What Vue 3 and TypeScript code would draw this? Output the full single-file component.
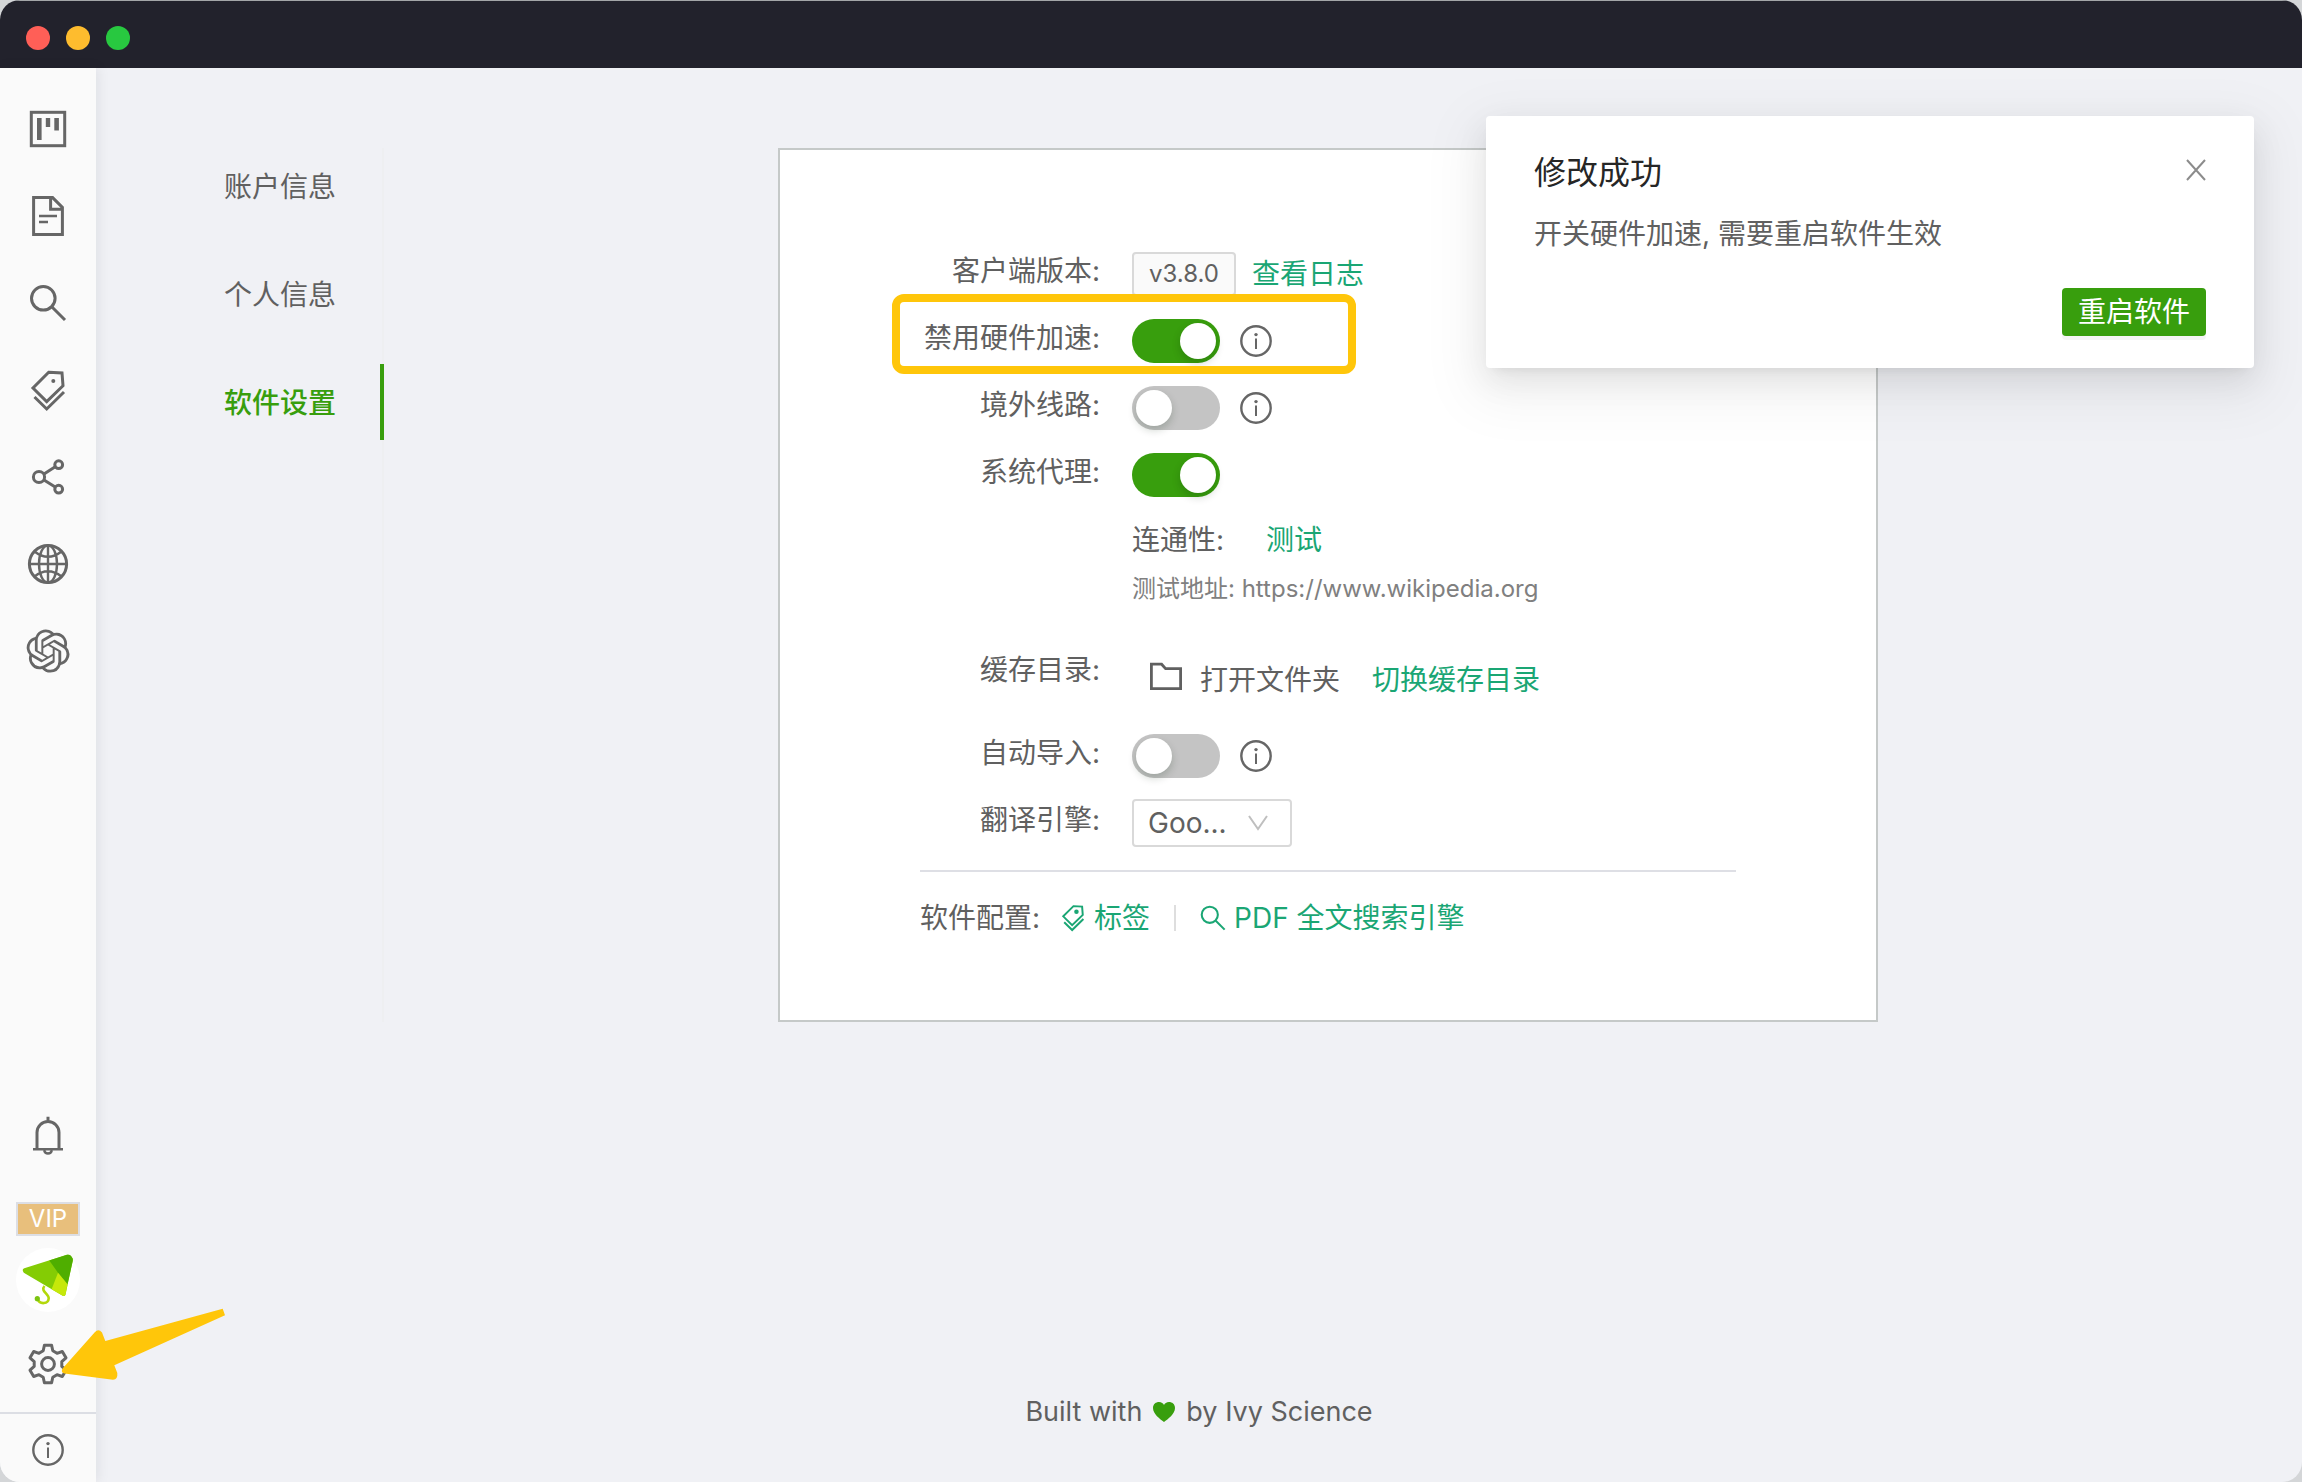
<script setup lang="ts">
import { ref } from 'vue'

type IconName = 'board' | 'file' | 'search' | 'tags' | 'share' | 'globe' | 'ai'

const navIcons: { name: IconName; label: string }[] = [
  { name: 'board', label: '看板' },
  { name: 'file', label: '文献' },
  { name: 'search', label: '搜索' },
  { name: 'tags', label: '标签' },
  { name: 'share', label: '分享' },
  { name: 'globe', label: '网络' },
  { name: 'ai', label: 'AI' },
]

const tabs = ['账户信息', '个人信息', '软件设置']
const activeTab = ref('软件设置')

const disableGpu = ref(true)
const overseas = ref(false)
const proxy = ref(true)
const autoImport = ref(false)
const engine = ref('google')

// Outline of a six-toothed gear centred on (24, 24)
function gearOutline(): string {
  const points: string[] = []
  for (let tooth = 0; tooth < 6; tooth++) {
    const corners: [number, number][] = [[-20, 14], [-11, 19], [11, 19], [20, 14]]
    for (const [offset, radius] of corners) {
      const angle = ((tooth * 60 - 90 + offset) * Math.PI) / 180
      points.push(`${(24 + radius * Math.cos(angle)).toFixed(1)} ${(24 + radius * Math.sin(angle)).toFixed(1)}`)
    }
  }
  return `M${points.join('L')}Z`
}
const gear = gearOutline()
</script>

<template>
  <div class="window">
    <header class="titlebar">
      <button class="light close" aria-label="关闭窗口"></button>
      <button class="light minimise" aria-label="最小化"></button>
      <button class="light zoom" aria-label="缩放"></button>
    </header>

    <div class="body">
      <aside class="sidebar">
        <nav class="side-top">
          <button v-for="item in navIcons" :key="item.name" class="side-btn" :aria-label="item.label">
            <svg class="icon" viewBox="0 0 48 48">
              <template v-if="item.name === 'board'">
                <rect x="7.3" y="7.3" width="33.4" height="33.4" />
                <path class="solid" d="M13 13h4.6v22H13zM21.8 13h4.4v9h-4.4zM30.3 13h4.6v12.5h-4.6z" />
              </template>
              <template v-else-if="item.name === 'file'">
                <path d="M9.6 5.6H28.6L38.4 15.4V42.4H9.6ZM26.6 5.6V17.2H38.4" />
                <path class="thin" d="M15 24H33M15 30H24" />
              </template>
              <template v-else-if="item.name === 'search'">
                <circle cx="19.3" cy="19.3" r="11.8" />
                <path d="M28 28L41 41" />
              </template>
              <template v-else-if="item.name === 'tags'">
                <path d="M24.7 6.3L38 7L39 19.7L22.7 35.6L9 22ZM10.5 31L22.7 43L40 26" />
                <circle class="solid" cx="29.3" cy="15" r="2" />
              </template>
              <template v-else-if="item.name === 'share'">
                <circle cx="15" cy="24" r="5.6" />
                <circle cx="34.7" cy="11.7" r="3.9" />
                <circle cx="34.7" cy="36.2" r="3.9" />
                <path d="M20 21L31.2 13.8M20 27L31.2 34" />
              </template>
              <template v-else-if="item.name === 'globe'">
                <circle cx="24" cy="24" r="18.6" />
                <g class="thin">
                  <path d="M24 5V43M5 24H43M10.5 11.5Q24 22 37.5 11.5M10.5 36.5Q24 26 37.5 36.5" />
                  <ellipse cx="24" cy="24" rx="9" ry="18.6" />
                </g>
              </template>
              <path
                v-else
                class="solid"
                transform="translate(2.4 2.4) scale(1.8)"
                d="M22.2819 9.8211a5.9847 5.9847 0 0 0-.5157-4.9108 6.0462 6.0462 0 0 0-6.5098-2.9A6.0651 6.0651 0 0 0 4.9807 4.1818a5.9847 5.9847 0 0 0-3.9977 2.9 6.0462 6.0462 0 0 0 .7427 7.0966 5.98 5.98 0 0 0 .511 4.9107 6.051 6.051 0 0 0 6.5146 2.9001A5.9847 5.9847 0 0 0 13.2599 24a6.0557 6.0557 0 0 0 5.7718-4.2058 5.9894 5.9894 0 0 0 3.9977-2.9001 6.0557 6.0557 0 0 0-.7475-7.0729zm-9.022 12.6081a4.4755 4.4755 0 0 1-2.8764-1.0408l.1419-.0804 4.7783-2.7582a.7948.7948 0 0 0 .3927-.6813v-6.7369l2.02 1.1686a.071.071 0 0 1 .038.052v5.5826a4.504 4.504 0 0 1-4.4945 4.4944zm-9.6607-4.1254a4.4708 4.4708 0 0 1-.5346-3.0137l.142.0852 4.783 2.7582a.7712.7712 0 0 0 .7806 0l5.8428-3.3685v2.3324a.0804.0804 0 0 1-.0332.0615L9.74 19.9502a4.4992 4.4992 0 0 1-6.1408-1.6464zM2.3408 7.8956a4.485 4.485 0 0 1 2.3655-1.9728V11.6a.7664.7664 0 0 0 .3879.6765l5.8144 3.3543-2.0201 1.1685a.0757.0757 0 0 1-.071 0l-4.8303-2.7865A4.504 4.504 0 0 1 2.3408 7.872zm16.5963 3.8558L13.1038 8.364 15.1192 7.2a.0757.0757 0 0 1 .071 0l4.8303 2.7913a4.4944 4.4944 0 0 1-.6765 8.1042v-5.6772a.79.79 0 0 0-.407-.667zm2.0107-3.0231l-.142-.0852-4.7735-2.7818a.7759.7759 0 0 0-.7854 0L9.409 9.2297V6.8974a.0662.0662 0 0 1 .0284-.0615l4.8303-2.7866a4.4992 4.4992 0 0 1 6.6802 4.66zM8.3065 12.863l-2.02-1.1638a.0804.0804 0 0 1-.038-.0567V6.0742a4.4992 4.4992 0 0 1 7.3757-3.4537l-.142.0805L8.704 5.459a.7948.7948 0 0 0-.3927.6813zm1.0976-2.3654l2.602-1.4998 2.6069 1.4998v2.9994l-2.5974 1.4997-2.6067-1.4997Z"
              />
            </svg>
          </button>
        </nav>

        <div class="side-bottom">
          <button class="side-btn bell" aria-label="通知">
            <svg class="icon" viewBox="0 0 48 48">
              <path d="M13 37V20.5a11 11 0 0 1 22 0V37M24 4.7V9" />
              <path class="thin" d="M9 37.3H39M20.2 38.5a3.9 3.9 0 0 0 7.6 0" />
            </svg>
          </button>
          <span class="vip">VIP</span>
          <button class="avatar" aria-label="账户">
            <svg viewBox="0 0 64 64">
              <path
                fill="#84cc04"
                d="M8.300 20.200L51 6.800Q53.500 6.200 55 8L56 9.500Q57.200 11 56.700 13L49.500 46.500Q48.800 49 46.300 47.600L7.800 24.800Q5.400 21.300 8.300 20.200Z"
              />
              <path fill="#4fae00" d="M33.300 12.400L51 6.800Q53.500 6.200 55 8L56 9.500Q57.200 11 56.700 13L51.500 36.200L42 24.700Z" />
              <path fill="#c6e80a" d="M42 24.700L51.500 36.200L49.500 46.500Q48.800 49 46.300 47.600L35.600 41.200Z" />
              <path fill="none" stroke="#b3d80b" stroke-width="2.600" d="M28.500 38C24 43 33 46 32.700 50.500C32.300 56 24 57 21.500 51" />
              <circle cx="21.300" cy="50.700" r="2.600" fill="#7cc410" />
            </svg>
          </button>
          <button class="side-btn settings" aria-label="设置">
            <svg class="icon" viewBox="0 0 48 48">
              <path :d="gear" stroke-linejoin="round" />
              <circle cx="24" cy="24" r="6.4" />
            </svg>
          </button>
          <button class="side-btn about" aria-label="关于">
            <svg class="info" viewBox="0 0 32 32">
              <circle cx="16" cy="16" r="14.700" />
              <path class="solid" d="M15 13.600h2v10.400h-2z" />
              <circle class="solid" cx="16" cy="9.600" r="1.700" />
            </svg>
          </button>
        </div>

        <svg class="arrow" viewBox="0 0 168 76" aria-hidden="true">
          <path d="M162.700 2.700L165 9.300L54.300 59.300L57.300 67Q58 73.500 53 73.700L4.500 67.600Q0 66 3 62L35 26Q38.500 22.500 42 26.500L45.300 35Z" />
        </svg>
      </aside>

      <main class="main">
        <div class="content">
          <nav class="tabs">
            <button v-for="tab in tabs" :key="tab" class="tab" :class="{ active: tab === activeTab }" @click="activeTab = tab">
              {{ tab }}
            </button>
          </nav>

          <div class="stage">
            <section class="card">
              <div class="row">
                <span class="label">客户端版本:</span>
                <div class="control">
                  <span class="version">v3.8.0</span>
                  <a class="link" href="#log">查看日志</a>
                </div>
              </div>
              <div class="row marked">
                <label class="label" for="gpu">禁用硬件加速:</label>
                <div class="control spaced">
                  <input id="gpu" v-model="disableGpu" class="switch" type="checkbox" role="switch" />
                  <svg class="info" viewBox="0 0 32 32">
                    <circle cx="16" cy="16" r="14.700" />
                    <path class="solid" d="M15 13.600h2v10.400h-2z" />
                    <circle class="solid" cx="16" cy="9.600" r="1.700" />
                  </svg>
                </div>
              </div>
              <div class="row">
                <label class="label" for="overseas">境外线路:</label>
                <div class="control spaced">
                  <input id="overseas" v-model="overseas" class="switch" type="checkbox" role="switch" />
                  <svg class="info" viewBox="0 0 32 32">
                    <circle cx="16" cy="16" r="14.700" />
                    <path class="solid" d="M15 13.600h2v10.400h-2z" />
                    <circle class="solid" cx="16" cy="9.600" r="1.700" />
                  </svg>
                </div>
              </div>
              <div class="row">
                <label class="label" for="proxy">系统代理:</label>
                <div class="control">
                  <input id="proxy" v-model="proxy" class="switch" type="checkbox" role="switch" />
                </div>
              </div>
              <div class="probe">
                <p class="probe-line">连通性:<button class="link test">测试</button></p>
                <p class="probe-url">测试地址: https://www.wikipedia.org</p>
              </div>
              <div class="row cache">
                <span class="label">缓存目录:</span>
                <div class="control">
                  <button class="folder">
                    <svg viewBox="0 0 32 28">
                      <path d="M1.400 2.200H11.600L15.600 6.600H30.600V26.600H1.400Z" />
                    </svg>
                    打开文件夹
                  </button>
                  <button class="link">切换缓存目录</button>
                </div>
              </div>
              <div class="row">
                <label class="label" for="import">自动导入:</label>
                <div class="control spaced">
                  <input id="import" v-model="autoImport" class="switch" type="checkbox" role="switch" />
                  <svg class="info" viewBox="0 0 32 32">
                    <circle cx="16" cy="16" r="14.700" />
                    <path class="solid" d="M15 13.600h2v10.400h-2z" />
                    <circle class="solid" cx="16" cy="9.600" r="1.700" />
                  </svg>
                </div>
              </div>
              <div class="row">
                <label class="label" for="engine">翻译引擎:</label>
                <div class="control">
                  <div class="select">
                    <select id="engine" v-model="engine">
                      <option value="google">Goo...</option>
                    </select>
                    <svg viewBox="0 0 20 16"><path d="M1 1L10 14L19 1" /></svg>
                  </div>
                </div>
              </div>
              <div class="config">
                <span class="config-label">软件配置:</span>
                <a class="link with-icon" href="#tags">
                  <svg class="mini" viewBox="5 3 38 43">
                    <path d="M24.7 6.3L38 7L39 19.7L22.7 35.6L9 22ZM10.5 31L22.7 43L40 26" />
                    <circle class="solid" cx="29.3" cy="15" r="2" />
                  </svg>
                  标签
                </a>
                <i class="bar"></i>
                <a class="link with-icon" href="#pdf">
                  <svg class="mini" viewBox="5 5 38 38">
                    <circle cx="19.3" cy="19.3" r="11.8" />
                    <path d="M28 28L41 41" />
                  </svg>
                  PDF 全文搜索引擎
                </a>
              </div>
            </section>
          </div>
        </div>

        <footer class="footer">
          Built with
          <svg viewBox="0 0 22 22">
            <path d="M11 21C7 18 0 13 0 7C0 3 3 1 6 1C8.500 1 10.200 2.400 11 4C11.800 2.400 13.500 1 16 1C19 1 22 3 22 7C22 13 15 18 11 21Z" />
          </svg>
          by Ivy Science
        </footer>
      </main>
    </div>

    <div class="notice" role="alert">
      <div class="notice-head">
        <h2>修改成功</h2>
        <button class="dismiss" aria-label="关闭">
          <svg viewBox="0 0 20 22"><path d="M1 1L19 21M19 1L1 21" /></svg>
        </button>
      </div>
      <p>开关硬件加速, 需要重启软件生效</p>
      <button class="restart">重启软件</button>
    </div>
  </div>
</template>

<style>
html {
  background: #d4d6d8;
}
body {
  margin: 0;
}
</style>

<style scoped>
*,
*::before,
*::after {
  box-sizing: border-box;
}
.window {
  position: relative;
  display: flex;
  flex-direction: column;
  min-height: 100vh;
  overflow: hidden;
  border-radius: 20px;
  background: #f0f1f5;
  color: #606060;
  font: 28px/44px Inter, 'Noto Sans CJK SC', sans-serif;
}
button {
  margin: 0;
  padding: 0;
  border: 0;
  background: none;
  color: inherit;
  font: inherit;
  cursor: pointer;
}
p,
h2 {
  margin: 0;
}
svg {
  display: block;
  flex: none;
}
.titlebar {
  display: flex;
  align-items: center;
  gap: 16px;
  height: 68px;
  padding: 7px 26px 0;
  border-top: 1px solid #a3a6a8;
  background: #22222c;
}
.light {
  width: 24px;
  height: 24px;
  border-radius: 50%;
}
.close {
  background: #ff5f57;
}
.minimise {
  background: #febc2e;
}
.zoom {
  background: #28c840;
}
.body {
  display: flex;
  flex: 1;
}

/* Sidebar */
.sidebar {
  position: relative;
  display: flex;
  flex-direction: column;
  justify-content: space-between;
  width: 96px;
  padding-top: 17px;
  background: #fafafa;
  box-shadow: 2px 0 12px rgba(0, 21, 41, 0.08);
}
.side-top,
.side-bottom {
  display: flex;
  flex-direction: column;
  align-items: center;
}
.side-btn {
  display: flex;
  align-items: center;
  justify-content: center;
  width: 100%;
  height: 87px;
}
.icon {
  width: 48px;
  height: 48px;
}
.icon,
.info,
.mini {
  fill: none;
  stroke: #666;
  stroke-width: 3;
}
.thin {
  stroke-width: 2.4;
}
.icon .solid,
.info .solid {
  fill: #666;
  stroke: none;
}
.info {
  width: 32px;
  height: 32px;
  stroke-width: 2.4;
}
.bell {
  margin-bottom: 23px;
}
.vip {
  width: 64px;
  margin-bottom: 12px;
  border: 2px solid #dcdee4;
  background: #e8bf7c;
  color: #fff;
  font-size: 24px;
  line-height: 30px;
  text-align: center;
}
.avatar {
  width: 64px;
  height: 64px;
  margin-bottom: 4px;
  border-radius: 50%;
  background: #fff;
}
.settings {
  height: 96px;
}
.about {
  height: 70px;
  padding-top: 4px;
  border-top: 2px solid #dcdee4;
}
.arrow {
  position: absolute;
  bottom: 100px;
  left: 60px;
  z-index: 2;
  width: 168px;
  height: 76px;
  fill: #ffc60a;
}

/* Main area */
.main {
  display: flex;
  flex: 1;
  flex-direction: column;
  justify-content: space-between;
  padding: 80px 0 48px;
}
.content {
  display: flex;
}
.tabs {
  display: flex;
  flex-direction: column;
  gap: 32px;
  width: 288px;
  border-right: 2px solid #eeeff1;
}
.tab {
  height: 76px;
  margin-right: -2px;
  padding: 2px 0 0 128px;
  border-right: 4px solid transparent;
  text-align: left;
}
.tab.active {
  border-color: #389e0d;
  color: #389e0d;
  font-weight: 500;
}
.stage {
  display: flex;
  flex: 1;
  justify-content: center;
  padding-right: 30px;
}
.card {
  width: 1100px;
  padding: 90px 140px 56px;
  border: 2px solid #c5c9c8;
  background: #fff;
}
.row {
  position: relative;
  display: flex;
  align-items: center;
  gap: 32px;
  height: 67px;
}
.label {
  width: 180px;
  padding-bottom: 6px;
  text-align: right;
  white-space: nowrap;
}
.control {
  display: flex;
  align-items: center;
  gap: 16px;
}
.spaced {
  gap: 20px;
}
.marked::after {
  position: absolute;
  top: -13px;
  bottom: 0;
  left: -28px;
  width: 464px;
  border: 8px solid #ffc60a;
  border-radius: 12px;
  content: '';
  pointer-events: none;
}
.link {
  color: #1aa674;
  text-decoration: none;
}
.version {
  padding: 0 15px;
  border: 2px solid #d9d9d9;
  border-radius: 4px;
  background: #fafafa;
  font-size: 24px;
  line-height: 40px;
}
.switch {
  width: 88px;
  height: 44px;
  margin: 0;
  padding: 4px;
  border-radius: 22px;
  background: #c4c4c4;
  appearance: none;
  cursor: pointer;
}
.switch::before {
  display: block;
  width: 36px;
  height: 36px;
  border-radius: 50%;
  background: #fff;
  box-shadow: 0 4px 8px rgba(0, 35, 11, 0.2);
  content: '';
}
.switch:checked {
  background: #389e0d;
}
.switch:checked::before {
  margin-left: auto;
}
.probe {
  padding-left: 212px;
}
.probe-line {
  line-height: 64px;
}
.test {
  margin-left: 42px;
}
.probe-url {
  color: #808080;
  font-size: 24px;
  line-height: 34px;
}
.cache {
  margin: 40px 0 9px;
}
.cache .label {
  padding-bottom: 20px;
}
.folder {
  display: flex;
  align-items: center;
  gap: 18px;
  margin: 0 16px 0 18px;
}
.folder svg {
  width: 32px;
  height: 28px;
  margin-bottom: 8px;
  fill: none;
  stroke: #606060;
  stroke-width: 2.8;
}
.select {
  position: relative;
}
.select select {
  width: 160px;
  height: 48px;
  padding: 0 14px;
  border: 2px solid #d9d9d9;
  border-radius: 4px;
  background: #fff;
  color: inherit;
  font: inherit;
  appearance: none;
}
.select svg {
  position: absolute;
  top: 16px;
  right: 24px;
  width: 20px;
  height: 16px;
  fill: none;
  stroke: #bfbfbf;
  stroke-width: 2;
  pointer-events: none;
}
.config {
  display: flex;
  align-items: center;
  height: 94px;
  margin-top: 14px;
  border-top: 2px solid #dedfe5;
}
.config-label {
  margin-right: 20px;
}
.with-icon {
  display: flex;
  align-items: center;
  gap: 8px;
}
.mini {
  width: 26px;
  height: 28px;
  stroke: #1aa674;
}
.mini .solid {
  fill: #1aa674;
}
.bar {
  width: 2px;
  height: 26px;
  margin: 0 24px;
  background: #dedede;
}
.footer {
  display: flex;
  align-items: center;
  justify-content: center;
  gap: 11px;
  font-size: 27px;
}
.footer svg {
  width: 22px;
  height: 22px;
  fill: #389e0d;
}

/* Notification */
.notice {
  position: absolute;
  top: 116px;
  right: 48px;
  width: 768px;
  padding: 32px 48px;
  border-radius: 4px;
  background: #fff;
  box-shadow: 0 6px 12px -8px rgba(0, 0, 0, 0.12), 0 12px 32px rgba(0, 0, 0, 0.08), 0 18px 56px 16px rgba(0, 0, 0, 0.05);
}
.notice-head {
  display: flex;
  align-items: flex-start;
  justify-content: space-between;
  margin-bottom: 14px;
}
.notice h2 {
  color: #262626;
  font-size: 32px;
  font-weight: 400;
  line-height: 50px;
}
.dismiss {
  padding: 11px 0;
}
.dismiss svg {
  width: 20px;
  height: 22px;
  fill: none;
  stroke: #8c8c8c;
  stroke-width: 2;
}
.restart {
  display: block;
  height: 48px;
  margin: 32px 0 0 auto;
  padding: 0 16px;
  border-radius: 4px;
  background: #389e0d;
  box-shadow: 0 4px 0 rgba(0, 0, 0, 0.04);
  color: #fff;
  line-height: 48px;
}
</style>
